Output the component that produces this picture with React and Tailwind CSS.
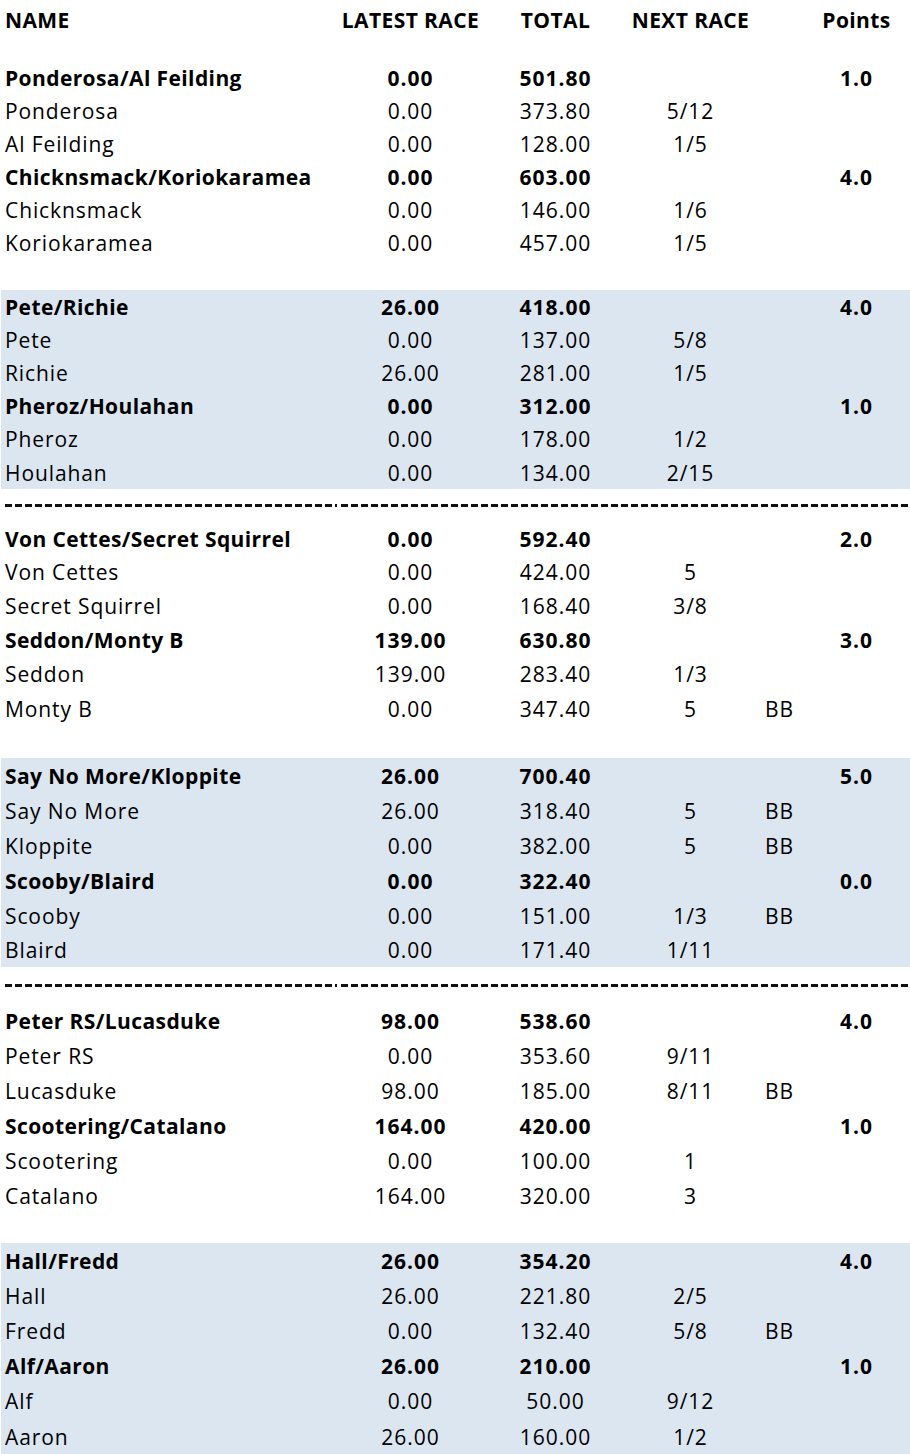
import React from "react";

const blocks = [
  {
    shaded: false,
    heights: [33, 33, 33, 33, 33, 33],
    rows: [
      ["Ponderosa/Al Feilding", "0.00", "501.80", "", "", "1.0", true],
      ["Ponderosa", "0.00", "373.80", "5/12", "", "", false],
      ["Al Feilding", "0.00", "128.00", "1/5", "", "", false],
      ["Chicknsmack/Koriokaramea", "0.00", "603.00", "", "", "4.0", true],
      ["Chicknsmack", "0.00", "146.00", "1/6", "", "", false],
      ["Koriokaramea", "0.00", "457.00", "1/5", "", "", false],
    ],
  },
  { spacer: 31 },
  {
    shaded: true,
    heights: [33, 33, 33, 33, 33, 34],
    rows: [
      ["Pete/Richie", "26.00", "418.00", "", "", "4.0", true],
      ["Pete", "0.00", "137.00", "5/8", "", "", false],
      ["Richie", "26.00", "281.00", "1/5", "", "", false],
      ["Pheroz/Houlahan", "0.00", "312.00", "", "", "1.0", true],
      ["Pheroz", "0.00", "178.00", "1/2", "", "", false],
      ["Houlahan", "0.00", "134.00", "2/15", "", "", false],
    ],
  },
  { dashed: 33 },
  {
    shaded: false,
    heights: [33, 33, 34, 34, 35, 35],
    rows: [
      ["Von Cettes/Secret Squirrel", "0.00", "592.40", "", "", "2.0", true],
      ["Von Cettes", "0.00", "424.00", "5", "", "", false],
      ["Secret Squirrel", "0.00", "168.40", "3/8", "", "", false],
      ["Seddon/Monty B", "139.00", "630.80", "", "", "3.0", true],
      ["Seddon", "139.00", "283.40", "1/3", "", "", false],
      ["Monty B", "0.00", "347.40", "5", "BB", "", false],
    ],
  },
  { spacer: 32 },
  {
    shaded: true,
    heights: [35, 35, 35, 35, 34, 35],
    rows: [
      ["Say No More/Kloppite", "26.00", "700.40", "", "", "5.0", true],
      ["Say No More", "26.00", "318.40", "5", "BB", "", false],
      ["Kloppite", "0.00", "382.00", "5", "BB", "", false],
      ["Scooby/Blaird", "0.00", "322.40", "", "", "0.0", true],
      ["Scooby", "0.00", "151.00", "1/3", "BB", "", false],
      ["Blaird", "0.00", "171.40", "1/11", "", "", false],
    ],
  },
  { dashed: 36 },
  {
    shaded: false,
    heights: [35, 35, 35, 35, 35, 35],
    rows: [
      ["Peter RS/Lucasduke", "98.00", "538.60", "", "", "4.0", true],
      ["Peter RS", "0.00", "353.60", "9/11", "", "", false],
      ["Lucasduke", "98.00", "185.00", "8/11", "BB", "", false],
      ["Scootering/Catalano", "164.00", "420.00", "", "", "1.0", true],
      ["Scootering", "0.00", "100.00", "1", "", "", false],
      ["Catalano", "164.00", "320.00", "3", "", "", false],
    ],
  },
  { spacer: 30 },
  {
    shaded: true,
    heights: [35, 35, 35, 35, 35, 36],
    rows: [
      ["Hall/Fredd", "26.00", "354.20", "", "", "4.0", true],
      ["Hall", "26.00", "221.80", "2/5", "", "", false],
      ["Fredd", "0.00", "132.40", "5/8", "BB", "", false],
      ["Alf/Aaron", "26.00", "210.00", "", "", "1.0", true],
      ["Alf", "0.00", "50.00", "9/12", "", "", false],
      ["Aaron", "26.00", "160.00", "1/2", "", "", false],
    ],
  },
];

function Row({ r, h }) {
  const [name, latest, total, next, bb, pts, bold] = r;
  return (
    <div
      className={`flex items-center pt-[2px] ${bold ? "font-bold" : "font-normal"}`}
      style={{ height: h }}
    >
      <div
        className={`w-[339px] pl-[4px] whitespace-nowrap ${
          bold ? "tracking-[0.4px]" : "tracking-[0.9px]"
        }`}
      >
        {name}
      </div>
      <div className="w-[140px] text-center tracking-[1px] pl-[1px]">{latest}</div>
      <div className="w-[150px] text-center tracking-[1px] pl-[1px]">{total}</div>
      <div className="w-[120px] text-center tracking-[1px] pl-[1px]">{next}</div>
      <div className="w-[58px] text-center tracking-[1px] pl-[1px]">{bb}</div>
      <div className="w-[96px] text-center tracking-[1px] pl-[1px]">{pts}</div>
    </div>
  );
}

function Dashed({ h }) {
  return (
    <div className="flex items-center" style={{ height: h }}>
      <div className="ml-[5px] w-[332px] h-[3px] bg-[repeating-linear-gradient(90deg,#111_0_7px,transparent_7px_10px)]" />
      <div className="ml-[4px] flex-1 h-[3px] bg-[repeating-linear-gradient(90deg,#111_0_7px,transparent_7px_10px)]" />
    </div>
  );
}

export default function App() {
  return (
    <div className="w-[910px] h-[1454px] overflow-hidden bg-white text-black text-[21px] leading-none font-['Open_Sans',sans-serif]">
      <div className="flex items-center h-[40px] font-bold tracking-[0.4px] whitespace-nowrap">
        <div className="w-[340px] pl-[5px]">NAME</div>
        <div className="w-[140px] flex justify-center pl-[1px]">LATEST RACE</div>
        <div className="w-[150px] flex justify-center pl-[1px]">TOTAL</div>
        <div className="w-[120px] flex justify-center pl-[1px]">NEXT RACE</div>
        <div className="w-[58px]" />
        <div className="w-[96px] flex justify-center pl-[1px]">Points</div>
      </div>
      <div className="h-[21px]" />
      {blocks.map((b, i) => {
        if (b.spacer) return <div key={i} style={{ height: b.spacer }} />;
        if (b.dashed) return <Dashed key={i} h={b.dashed} />;
        return (
          <div key={i} className={b.shaded ? "ml-[1px] bg-[#dce6f1]" : "ml-[1px]"}>
            {b.rows.map((r, j) => (
              <Row key={j} r={r} h={b.heights[j]} />
            ))}
          </div>
        );
      })}
    </div>
  );
}
